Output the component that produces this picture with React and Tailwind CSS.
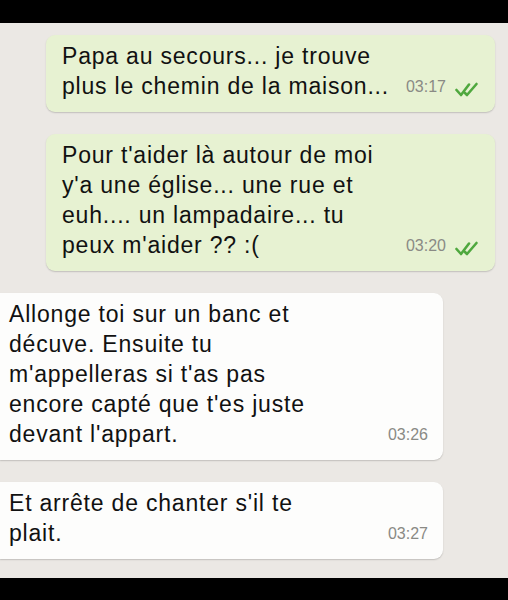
// WhatsApp-style conversation screenshot
const font = { fontFamily: '"Liberation Sans", Arial, sans-serif' };

// double tick shown after sent messages
function DoubleCheck() {
  return (
    <svg width="27" height="15" viewBox="0 0 27 15" fill="none" className="ml-[9px] mb-[4px]">
      <path d="M1.5 8 L6 13 L14 2.5" stroke="#4fa83e" strokeWidth="2.6" strokeLinecap="round" strokeLinejoin="round" />
      <path d="M10 11 L12 13 L21.5 2" stroke="#4fa83e" strokeWidth="2.6" strokeLinecap="round" strokeLinejoin="round" />
    </svg>
  );
}

function Bubble({ lines, time, sent }) {
  return (
    <div
      className={
        sent
          ? "ml-[46px] mr-[13px] rounded-[9px] bg-[#e7f2d2] pl-[16px] pr-[13px] pt-[6px] pb-[11px] shadow-[0_1px_1.5px_rgba(0,0,0,0.18)]"
          : "mr-[65px] rounded-r-[9px] bg-[#fdfdfc] pl-[9px] pr-[15px] pt-[6px] pb-[11px] shadow-[0_1px_1.5px_rgba(0,0,0,0.18)]"
      }
    >
      <div className="flex items-end">
        <div className="flex-1 text-[23px] tracking-[0.8px] leading-[30px] text-[#111111]">
          {lines.map((l, i) => (
            <div key={i} className="whitespace-nowrap">{l}</div>
          ))}
        </div>
        <div className="flex items-end">
          <span className="text-[16px] leading-[30px] text-[#8a8a85] mb-[-1px]">{time}</span>
          {sent && <DoubleCheck />}
        </div>
      </div>
    </div>
  );
}

export default function App() {
  return (
    <div className="w-[508px] h-[600px] flex flex-col bg-black" style={font}>
      <div className="h-[23px] bg-black" />
      {/* chat area */}
      <div className="h-[555px] bg-[#ebe8e4] pt-[12px] flex flex-col gap-[22px]">
        <Bubble sent time="03:17" lines={["Papa au secours... je trouve", "plus le chemin de la maison..."]} />
        <Bubble
          sent
          time="03:20"
          lines={["Pour t'aider là autour de moi", "y'a une église... une rue et", "euh.... un lampadaire... tu", "peux m'aider ?? :("]}
        />
        <Bubble
          time="03:26"
          lines={["Allonge toi sur un banc et", "décuve. Ensuite tu", "m'appelleras si t'as pas", "encore capté que t'es juste", "devant l'appart."]}
        />
        <Bubble time="03:27" lines={["Et arrête de chanter s'il te", "plait."]} />
      </div>
      <div className="h-[22px] bg-black" />
    </div>
  );
}
